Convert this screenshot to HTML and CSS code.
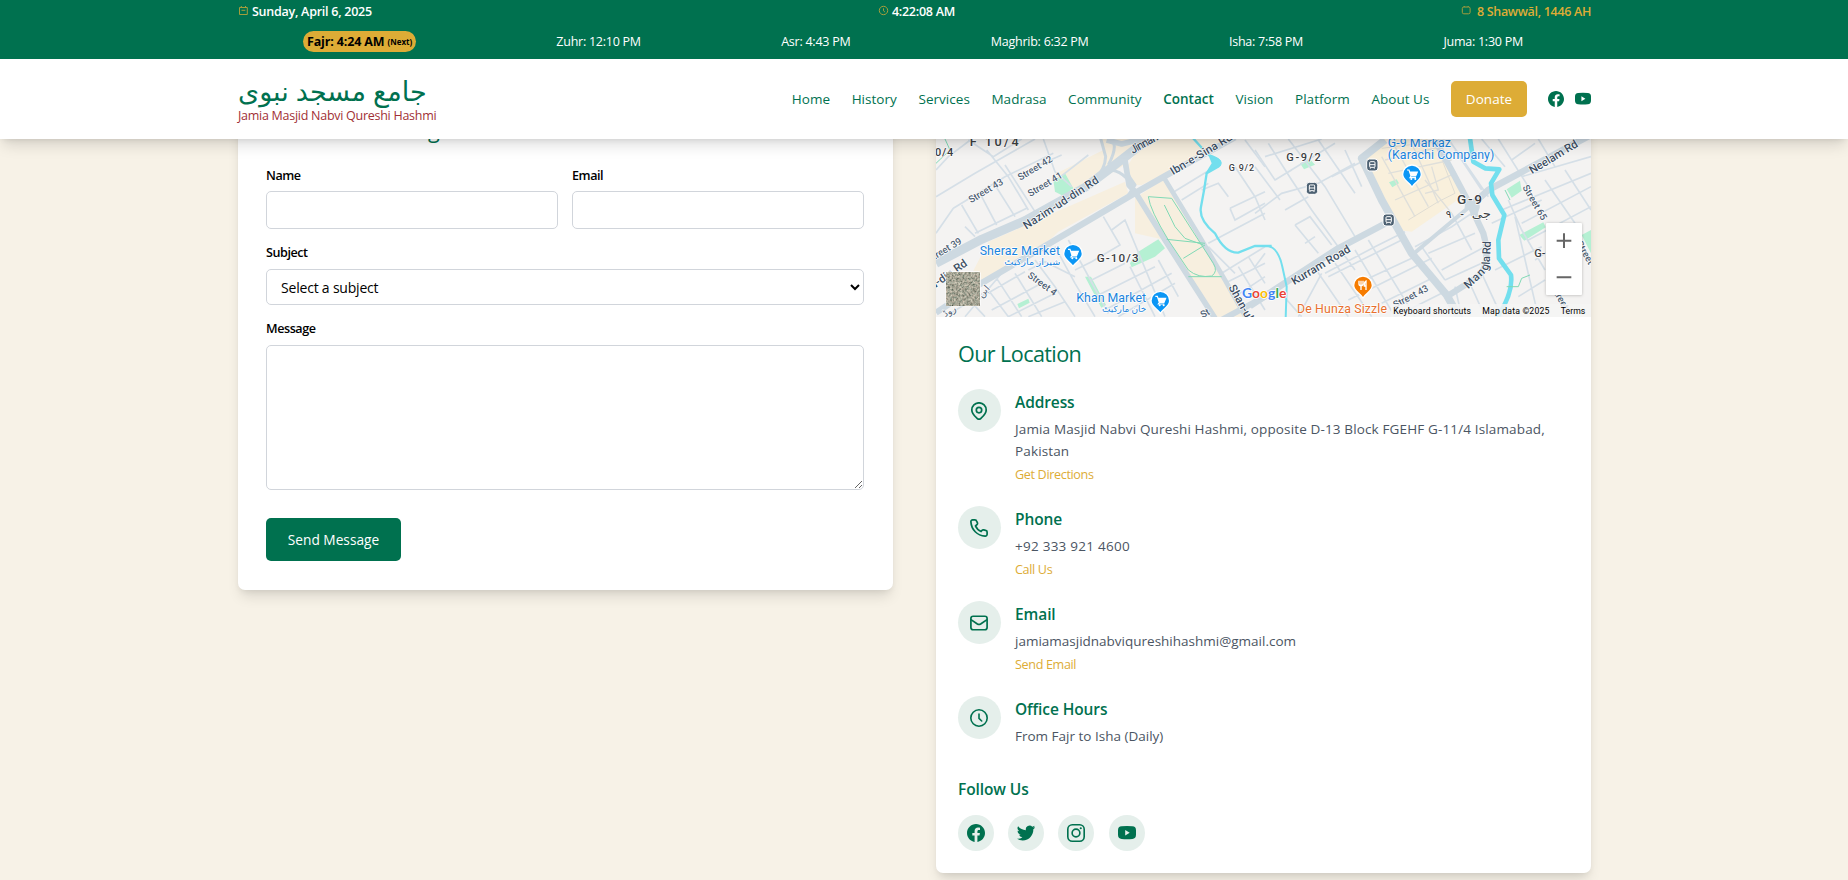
FILE: index.html
```html
<!DOCTYPE html>
<html lang="en">
<head>
<meta charset="utf-8">
<title>Contact - Jamia Masjid Nabvi Qureshi Hashmi</title>
<link rel="stylesheet" href="styles.css">
</head>
<body>
<svg class="defs" width="0" height="0">
  <symbol id="facebook" viewBox="2 2 20 20"><path fill="currentColor" d="M12 2C6.477 2 2 6.477 2 12c0 4.991 3.658 9.128 8.438 9.879V14.89H7.898V12h2.54V9.797c0-2.506 1.492-3.89 3.777-3.89 1.094 0 2.238.195 2.238.195v2.46h-1.26c-1.243 0-1.63.771-1.63 1.562V12h2.773l-.443 2.89h-2.33v6.989C18.343 21.129 22 16.99 22 12c0-5.523-4.477-10-10-10Z"/></symbol>
  <symbol id="youtube" viewBox="2 2 20 20"><path fill="currentColor" fill-rule="evenodd" d="M6 4.6Q12 4 18 4.6Q22 4.8 22 9v5q0 4.400-4 4.600Q12 19.200 6 18.600Q2 18.400 2 14V9Q2 4.800 6 4.600ZM10 8.700v6l5-3Z"/></symbol>
  <symbol id="twitter" viewBox="2 2 20 20"><path fill="currentColor" d="M22.212 5.656a8.4 8.400 0 0 1-2.402.658A4.200 4.200 0 0 0 21.650 4a8.400 8.400 0 0 1-2.656 1.015 4.182 4.182 0 0 0-7.126 3.814A11.870 11.870 0 0 1 3.247 4.460a4.180 4.180 0 0 0 1.294 5.583 4.200 4.200 0 0 1-1.894-.523v.051a4.180 4.180 0 0 0 3.355 4.102 4.200 4.200 0 0 1-1.890.072 4.190 4.190 0 0 0 3.908 2.904A8.390 8.390 0 0 1 1.828 18.380a11.830 11.830 0 0 0 6.410 1.880c7.694 0 11.900-6.373 11.900-11.899l-.012-.541a8.500 8.500 0 0 0 2.086-2.164Z"/></symbol>
  <symbol id="instagram" viewBox="2 2 20 20"><g fill="none" stroke="currentColor" stroke-width="1.800"><rect x="2.900" y="2.900" width="18.200" height="18.200" rx="5"/><circle cx="12" cy="12" r="4.300"/></g><circle cx="17.300" cy="6.700" r="1.200" fill="currentColor"/></symbol>
  <symbol id="clock" viewBox="2 2 20 20"><g fill="none" stroke="currentColor" stroke-width="1.800" stroke-linecap="round" stroke-linejoin="round"><circle cx="12" cy="12" r="9.100"/><path d="M12 7.500V12.500L15 15.300"/></g></symbol>
</svg>

<header class="header">
  <div class="topbar">
    <div class="wrap">
      <div class="today">
        <span class="stamp"><svg class="mini" viewBox="0 0 11 11"><path d="M1.500 2.500h7.800v7H1.500zM3.300 1v1.500M7.500 1v1.500M3.500 5.300h3.800"/></svg><span>Sunday, April 6, 2025</span></span>
        <span class="stamp"><svg class="mini" viewBox="0 0 11 11"><circle cx="5.500" cy="5.500" r="4.200"/><path d="M5.500 3.300v2.500l1.400 1.200"/></svg><span>4:22:08 AM</span></span>
        <span class="stamp hijri"><svg class="mini" viewBox="0 0 11 11"><rect x="1.300" y="2" width="7.800" height="6.800" rx="1.500"/><path d="M3.200 1v1M7.200 1v1"/></svg><span>8 Shawwāl, 1446 AH</span></span>
      </div>
      <div class="prayers">
        <span class="next">Fajr: 4:24 AM <small>(Next)</small></span>
        <span>Zuhr: 12:10 PM</span>
        <span>Asr: 4:43 PM</span>
        <span>Maghrib: 6:32 PM</span>
        <span>Isha: 7:58 PM</span>
        <span>Juma: 1:30 PM</span>
      </div>
    </div>
  </div>
  <div class="wrap bar">
    <a class="brand"><span class="brand-ar" dir="rtl" lang="ur">جامع مسجد نبوی</span><span class="brand-en">Jamia Masjid Nabvi Qureshi Hashmi</span></a>
    <nav class="nav">
      <a>Home</a><a>History</a><a>Services</a><a>Madrasa</a><a>Community</a><a class="active">Contact</a><a>Vision</a><a>Platform</a><a>About Us</a>
      <a class="donate">Donate</a>
      <span class="nav-social"><svg><use href="#facebook"/></svg><svg><use href="#youtube"/></svg></span>
    </nav>
  </div>
</header>

<main class="wrap content">
  <section class="card form-card">
    <h2>Send Us a Message</h2>
    <form>
      <div class="pair">
        <label>Name<input type="text"></label>
        <label>Email<input type="text"></label>
      </div>
      <label>Subject<select><option>Select a subject</option></select></label>
      <label>Message<textarea></textarea></label>
      <button type="button">Send Message</button>
    </form>
  </section>

  <section class="card info-card">
    <svg class="map" viewBox="936 139 655 178">
      <defs>
        <filter id="terrain" x="0" y="0" width="1" height="1"><feTurbulence type="fractalNoise" baseFrequency=".16" numOctaves="4" seed="8"/><feColorMatrix values=".8 .2 0 0 -.12  .65 .3 0 0 -.1  .55 .25 0 0 -.1  0 0 0 0 1"/></filter>
        <g id="cart"><path d="M-28 0a28 28 0 1 1 56 0c0 18-18 22-28 38c-10-16-28-20-28-38z" fill="#0b96f5" stroke="#fff" stroke-width="4"/><path d="M-15-13h6l6 18h14l5-12h-22M-3 5l-3 5h18" fill="none" stroke="#fff" stroke-width="3.500"/><path d="M-7-7h23l-5 12h-14z" fill="#fff"/><circle cx="-2" cy="14" r="3" fill="#fff"/><circle cx="10" cy="14" r="3" fill="#fff"/></g>
        <g id="bus"><rect x="-17" y="-17" width="34" height="36" rx="9" fill="#4d6172" stroke="#fff" stroke-width="3"/><rect x="-8" y="-9" width="16" height="17" rx="3" fill="none" stroke="#fff" stroke-width="3"/><path d="M-8 0H8M-6 8v4M6 8v4" stroke="#fff" stroke-width="3"/></g>
      </defs>
      <rect x="936" y="139" width="655" height="178" fill="#f4f3f2"/>
      <g transform="translate(925 130) scale(.33333)">
        <g fill="#f7efdf">
          <path d="M385 135L535 60L525 27H680L590 110L540 140L450 185L430 160zM190 335L600 155L610 190L400 305L380 325L230 420L110 490zM600 120L650 40L720 27H900L735 125L650 165L620 165zM630 205L720 145L860 370L960 560H870L790 430L740 340L720 330L630 310z"/>
        </g>
        <g fill="#b5f0d3"><path d="M385 150L420 130L445 175L415 198L390 185zM615 400L640 365L700 328L720 355L690 380L620 412zM480 440h18l45 85l-14 8zM277 522L310 506L314 518L282 535z"/></g>
        <g class="minor">
          <path d="M33 200L150 130L330 27M33 120L70 80L140 27M85 235L240 140L385 70M130 30L205 80L290 27M110 225L160 310M165 190L215 285M210 165L270 260M185 60L250 140L310 240M240 105L330 245M355 27L390 125L440 170M150 310L305 235M33 310L85 235M120 290L150 320M400 145L490 75M330 110L410 75"/>
          <path d="M535 260L585 345L500 395L450 420M430 330L480 420L550 550M390 350L450 460L510 560M560 300L600 270L720 560M700 390L760 500M615 410L690 560M500 450L600 400M510 500L690 410M540 540L740 430M580 560L750 460M330 390L390 470L450 560M270 430L350 560M215 445L290 560M190 480L250 560M170 500L300 425M200 540L350 460M250 560L390 490M310 560L420 515M310 420L360 395L450 440M120 560L230 430M100 475L180 560M60 560L190 480"/>
          <path d="M960 30L1020 110M930 110L990 200L1020 270M740 190L870 110M770 210L850 160M830 180L880 160L910 200M915 235L1020 185M915 235L930 270L1020 220M850 340L1020 250M850 350L930 430M890 430L1020 350M900 460L1020 400M930 500L1020 440M940 410L1020 540M970 380L1020 460"/>
        </g>
        <g class="major">
          <path d="M33 400L170 328L300 272L480 172L560 112L640 50L680 25" stroke-width="27"/>
          <path d="M33 548L160 465L400 325L620 195L720 138L930 22" stroke-width="19"/>
          <path d="M527 25L542 80Q540 120 510 145M560 27Q580 50 550 105M600 85Q590 110 630 165L610 195M560 120Q610 130 630 190" stroke-width="9"/>
          <path d="M600 90L612 165L630 185L720 330L790 440L870 565M545 30L590 42L650 27" stroke-width="17"/>
          <path d="M718 145L830 330L900 450L970 575" stroke-width="14"/>
          <path d="M880 575L1020 500" stroke-width="18"/>
        </g>
        <path d="M740 205L670 200Q675 240 730 330L790 420Q820 445 860 438Q880 425 865 400zM718 225L750 290L780 325L835 345M725 328L840 340M775 385L840 345M790 440H890" fill="none" stroke="#80d9b5" stroke-width="3"/>
        <path d="M33 100L75 60L60 27" fill="none" stroke="#80d9b5" stroke-width="3"/>
        <path d="M800 20L850 75Q900 90 880 110L845 130Q838 180 828 230Q820 270 870 310Q900 370 940 368L990 348H1040" fill="none" stroke="#73dfee" stroke-width="7"/>
        <path d="M850 75Q900 85 887 108L840 132L860 100z" fill="#73dfee"/>
      </g>
      <g transform="translate(1255 130) scale(.33333)">
        <path d="M310 95L380 27H540L630 180L600 215L470 305L430 300L370 200z" fill="#f9f0dc"/>
        <path d="M380 55L540 35L600 190L550 215L460 270" fill="none" stroke="#e0ddd3" stroke-width="3"/>
        <g fill="#b5f0d3"><path d="M135 100L165 88L180 104L147 118zM402 157L425 148L432 160L412 172zM755 178L795 152L800 182L770 203zM793 315L865 277L872 292L808 332zM980 315L1008 300V370z"/></g>
        <g class="minor">
          <path d="M0 110L75 210M0 60L60 150L110 120M40 40L110 150L170 240L300 420M100 27L210 170L300 320M190 30L300 190M0 250L80 190L190 160L300 100M60 150L240 40M90 240L160 200M120 285L190 370M120 285L165 260L230 345M150 340L180 320M30 80L200 27M230 140L320 95M320 170L270 60M0 410L30 370M130 560L200 430M60 470L140 560M170 400L280 560M210 430L360 350L450 305M340 330L480 560M300 360L420 560M240 400L350 560M220 440L440 330M330 450L480 380M280 510L530 385M380 520L540 440M420 560L560 490M480 350L590 290L650 250"/>
          <path d="M570 450L680 400M520 370L660 310M560 420L690 350M500 350L570 450M590 250L650 360M600 60L680 180M580 27L700 200M680 27L750 110M730 27L820 170M850 27L900 110M770 90L840 40M800 140L1008 80M760 210L800 300L870 420M740 240L1008 130M800 280L1008 170M820 330L1008 230M840 390L900 350M780 260L850 560M870 150L960 280M930 120L1008 240M710 280L860 210M600 470L620 560M640 450L690 560M680 430L740 560M720 420L860 350M790 500L870 450"/>
        </g>
        <path class="market" d="M390 90L560 50M400 130L590 90M420 210L600 130M380 80L480 260M420 50L520 230M470 40L550 220M510 150L590 250M510 190L550 180L530 110"/>
        <g class="major">
          <path d="M-15 528L100 452L250 355L420 265" stroke-width="20"/>
          <path d="M475 372L560 300L650 225" stroke-width="12"/>
          <path d="M650 225L700 180L830 110L1020 8" stroke-width="20"/>
          <path d="M390 30L320 85L380 210L470 370L575 495L620 575" stroke-width="23"/>
          <path d="M535 20L600 140L645 225L685 310Q710 400 670 440L575 500" stroke-width="19"/>
          <path d="M630 225L665 230L655 260" stroke-width="19"/>
        </g>
        <path d="M645 25L655 95L690 115L733 118L708 160L712 195L748 255L730 330L732 385L768 435Q775 490 725 565" fill="none" stroke="#73dfee" stroke-width="14" stroke-linejoin="round"/>
        <path d="M0 348L40 348Q70 355 82 410L95 470L92 565" fill="none" stroke="#73dfee" stroke-width="6"/>
        <path d="M755 470H790L800 445L825 435M750 180L765 210" fill="none" stroke="#80d9b5" stroke-width="3"/>
      </g>
      <g class="places" transform="translate(925 130) scale(.33333)">
        <text class="area" x="134" y="49" font-size="38" textLength="147">F 10/4</text>
        <text class="area" x="30" y="79" font-size="33" textLength="55">0/4</text>
        <text class="street" transform="translate(286 152) rotate(-31)" textLength="115">Street 42</text>
        <text class="street" transform="translate(316 201) rotate(-31)" textLength="115">Street 41</text>
        <text class="street" transform="translate(138 220) rotate(-31)" textLength="115">Street 43</text>
        <text class="street" transform="translate(14 398) rotate(-31)" textLength="115">Street 39</text>
        <text class="street" transform="translate(306 440) rotate(36)" textLength="100">Street 4</text>
        <text class="road" transform="translate(304 299) rotate(-33)" textLength="262">Nazim-ud-din Rd</text>
        <text class="road" transform="translate(8 490) rotate(-35)" textLength="148">ud-din Rd</text>
        <text class="road" transform="translate(623 72) rotate(-29)" textLength="90">Jinnah</text>
        <text class="road" transform="translate(744 136) rotate(-31)" textLength="211">Ibn-e-Sina Rd</text>
        <text class="area" x="911" y="124" font-size="27" textLength="76">G 9/2</text>
        <text class="area" x="515" y="395" font-size="35" textLength="126">G-10/3</text>
        <text class="road" transform="translate(910 472) rotate(61)">Shan-ul-Haq</text>
        <text class="street" transform="translate(170 505) rotate(-48)">ابن</text>
        <text class="street" transform="translate(60 562) rotate(-30)">روڈ</text>
        <text class="street" transform="translate(833 565) rotate(-30)">St</text>
        <g class="shop"><text x="164" y="374" textLength="241">Sheraz Market</text><text class="ur" x="406" y="405" direction="rtl" textLength="168" lengthAdjust="spacingAndGlyphs">شیراز مارکیٹ</text><text x="454" y="517" textLength="209">Khan Market</text><text class="ur" x="664" y="545" direction="rtl" textLength="133" lengthAdjust="spacingAndGlyphs">خان مارکیٹ</text></g>
        <use href="#cart" x="444" y="371"/><use href="#cart" x="706" y="512"/>
        <g class="google"><text x="951" y="503" textLength="133" lengthAdjust="spacingAndGlyphs"><tspan fill="#4285f4">G</tspan><tspan fill="#ea4335">o</tspan><tspan fill="#fbbc05">o</tspan><tspan fill="#4285f4">g</tspan><tspan fill="#34a853">l</tspan><tspan fill="#ea4335">e</tspan></text></g>
        <rect x="62" y="424" width="105" height="105" rx="6" fill="#fff"/><rect x="65" y="427" width="99" height="99" rx="3" filter="url(#terrain)"/>
      </g>
      <g class="places" transform="translate(1255 130) scale(.33333)">
        <text class="area" x="94" y="94" font-size="33" textLength="103">G-9/2</text>
        <g class="shop"><text x="398" y="52" textLength="190">G-9 Markaz</text><text x="398" y="88" textLength="320">(Karachi Company)</text></g>
        <text class="area" x="606" y="221" font-size="41" textLength="75">G-9</text>
        <text class="area" x="572" y="263" font-size="32">۹</text><text class="area" x="616" y="263" font-size="32">-</text><text class="area" x="650" y="263" font-size="34" textLength="58" lengthAdjust="spacingAndGlyphs">جی</text>
        <text class="area" x="838" y="381" font-size="33">G-</text>
        <text class="road" transform="translate(831 133) rotate(-31)" textLength="164">Neelam Rd</text>
        <text class="street" transform="translate(802 172) rotate(60)" textLength="117">Street 65</text>
        <text class="street" transform="translate(963 340) rotate(60)" textLength="76">Street</text>
        <text class="street" transform="translate(888 475) rotate(60)" textLength="76">Street</text>
        <text class="road" transform="translate(118 466) rotate(-31)" textLength="199">Kurram Road</text>
        <text class="street" transform="translate(421 535) rotate(-28)" textLength="115">Street 43</text>
        <text class="road" transform="translate(640 478) rotate(-44)" textLength="72">Man</text>
        <text class="road" transform="translate(697 424) rotate(-70)">g</text>
        <text class="road" transform="translate(704 404) rotate(-87)" textLength="70">la Rd</text>
        <use href="#bus" x="352" y="104"/><use href="#bus" x="171" y="174"/><use href="#bus" x="401" y="269"/>
        <use href="#cart" x="471" y="133"/>
        <path d="M296 466a28 28 0 1 1 56 0c0 18-18 22-28 38c-10-16-28-20-28-38z" fill="#f67c01" stroke="#fff" stroke-width="4"/><path d="M312 452v9q0 6 6 6t6-6v-9M318 452v28M333 480v-27q-6 3-5 15h5" fill="none" stroke="#fff" stroke-width="4"/>
        <text x="126" y="549" class="food" textLength="270">De Hunza Sizzle</text>
        <rect x="408" y="522" width="600" height="40" fill="#f5f5f5" fill-opacity=".85"/>
        <g class="legal"><text x="415" y="551" textLength="233">Keyboard shortcuts</text><text x="682" y="551" textLength="201">Map data ©2025</text><text x="917" y="551" textLength="74">Terms</text></g>
        <rect x="873" y="279" width="108" height="216" rx="3" fill="#fff" class="zoom"/><path d="M905 332h44M927 310v44M905 442h44" stroke="#666" stroke-width="6"/>
      </g>
    </svg>
    <div class="info">
      <h2>Our Location</h2>
      <div class="rows">
        <div class="row"><span class="disc"><svg viewBox="2 2 20 20"><g fill="none" stroke="currentColor" stroke-width="1.900" stroke-linejoin="round"><path d="M12 2.900a8 8 0 0 0-8 8c0 4 2.600 6.300 5.800 9.200q2.200 2 4.400 0C17.400 17.200 20 14.900 20 10.900a8 8 0 0 0-8-8z"/><circle cx="12" cy="11" r="3"/></g></svg></span>
          <div><h3>Address</h3><p class="address">Jamia Masjid Nabvi Qureshi Hashmi, opposite D-13 Block FGEHF G-11/4 Islamabad, Pakistan</p><a>Get Directions</a></div></div>
        <div class="row"><span class="disc"><svg viewBox="2 2 20 20"><path fill="none" stroke="currentColor" stroke-width="1.900" stroke-linejoin="round" d="M6.500 3H4.900A2 2 0 0 0 3 5.200C3.600 14 10 20.400 18.800 21A2 2 0 0 0 21 19v-2.400a2 2 0 0 0-1.600-2l-2.200-.5a2 2 0 0 0-2 .7l-.9 1.100c-2.600-1-5-3.400-6.200-6.200l1.500-1.300a2 2 0 0 0 .7-2L9.400 4.600A2 2 0 0 0 7.400 3z"/></svg></span>
          <div><h3>Phone</h3><p class="phone">+92 333 921 4600</p><a>Call Us</a></div></div>
        <div class="row"><span class="disc"><svg viewBox="2 2 20 20"><g fill="none" stroke="currentColor" stroke-width="1.900" stroke-linecap="round" stroke-linejoin="round"><rect x="3" y="4.500" width="18" height="15" rx="2.500"/><path d="M3.500 8.500l6.700 4.600q1.800 1.100 3.600 0l6.700-4.600"/></g></svg></span>
          <div><h3>Email</h3><p>jamiamasjidnabviqureshihashmi@gmail.com</p><a>Send Email</a></div></div>
        <div class="row"><span class="disc"><svg><use href="#clock"/></svg></span>
          <div><h3>Office Hours</h3><p>From Fajr to Isha (Daily)</p></div></div>
      </div>
      <h3 class="follow">Follow Us</h3>
      <div class="social"><span><svg><use href="#facebook"/></svg></span><span><svg><use href="#twitter"/></svg></span><span><svg><use href="#instagram"/></svg></span><span><svg><use href="#youtube"/></svg></span></div>
    </div>
  </section>
</main>
</body>
</html>
```
FILE: styles.css
```css
* { box-sizing: border-box; }
body { margin: 0; height: 880px; overflow: hidden; background: #f7f2e7; font-family: "Open Sans", "Noto Sans", "DejaVu Sans", sans-serif; color: #000; }
h2, h3, p { margin: 0; font-weight: 400; }
.defs { display: block; }
.wrap { width: 1353px; margin: 0 auto 0 238px; }

.header { position: relative; z-index: 2; height: 139px; background: #fff; box-shadow: 0 9px 14px -3px rgba(0,0,0,.13), 0 3px 6px -3px rgba(0,0,0,.12); }
.topbar { height: 59px; background: #00714f; color: #fff; }
.today { height: 24px; display: flex; justify-content: space-between; }
.stamp { display: flex; gap: 3px; font-size: 12.5px; font-weight: 600; line-height: 23px; letter-spacing: -.25px; }
.mini { width: 11px; height: 11px; margin-top: 5px; fill: none; stroke: #ddac36; stroke-width: 1; opacity: .75; }
.hijri { color: #ddac36; letter-spacing: -.32px; }
.hijri .mini { margin-right: 2px; }
.prayers { display: flex; justify-content: space-between; align-items: center; height: 35px; padding: 0 68px 1px 65px; font-size: 12.5px; font-weight: 500; letter-spacing: -.25px; line-height: 21px; }
.next { width: 113px; background: #ddac36; color: #000; font-weight: 700; border-radius: 11px; padding: 0 4px; height: 21px; letter-spacing: -.15px; white-space: nowrap; }
.next small { font-size: 8px; letter-spacing: 0; vertical-align: 1px; }

.bar { display: flex; justify-content: space-between; align-items: center; height: 80px; }
.brand { display: flex; flex-direction: column; align-items: flex-start; padding-bottom: 1px; }
.brand-ar { font-size: 27px; line-height: 34px; color: #00714f; }
.brand-en { font-size: 12.5px; line-height: 16px; color: #9f3035; letter-spacing: -.27px; }
.nav { display: flex; align-items: center; gap: 21.6px; font-size: 13.5px; letter-spacing: .03px; color: #00714f; }
.active { font-weight: 600; }
.donate { width: 76px; height: 36px; margin-right: -.6px; border-radius: 5px; background: #ddac36; color: #fff; font-weight: 500; text-align: center; line-height: 36px; }
.nav-social { display: flex; gap: 11px; }
.nav-social svg { width: 16px; height: 16px; }

.content { display: flex; align-items: flex-start; gap: 43px; margin-top: -30px; }
.card { width: 655px; background: #fff; border-radius: 7px; box-shadow: 0 9px 14px -3px rgba(0,0,0,.12), 0 3px 6px -2px rgba(0,0,0,.08); }
.form-card { height: 481px; padding: 7px 29px 0 28px; }
.form-card h2 { font-size: 21.6px; line-height: 28px; letter-spacing: -.5px; color: #00714f; }
.form-card form { padding-top: 19px; }
.form-card label { display: block; font-size: 12.6px; font-weight: 600; letter-spacing: -.45px; line-height: 18px; padding-top: 4px; }
.pair { display: grid; grid-template-columns: 292px 292px; gap: 14px; margin-bottom: 11px; }
input, select, textarea { display: block; width: 598px; border: 1px solid #d1d5db; border-radius: 5px; background: #fff; outline: 0; color: #000; font: 14px "Open Sans", "Noto Sans", sans-serif; }
.pair input { width: 292px; height: 38px; margin-top: 6px; }
select { height: 36px; margin: 7px 0 11px; padding: 0 10px; letter-spacing: -.2px; }
textarea { height: 145px; margin-top: 7px; }
button { display: block; width: 135px; height: 43px; margin-top: 28px; padding: 0 0 1px; border: 0; border-radius: 5px; background: #00714f; color: #fff; font: 13.7px "Open Sans", "Noto Sans", sans-serif; }

.info-card { height: 764px; padding-top: 30px; }
.map { display: block; width: 655px; height: 178px; }
.minor { fill: none; stroke: #d5dfe7; stroke-width: 5; }
.market { fill: none; stroke: #dfdfda; stroke-width: 4; }
.major { fill: none; stroke: #cdd9e1; stroke-linejoin: round; }
.places { font-family: Roboto, "DejaVu Sans", sans-serif; }
.places text { paint-order: stroke; stroke: #fff; stroke-width: 4px; stroke-linejoin: round; }
.area { fill: #3c4043; font-weight: 500; }
.street { fill: #4f6174; font-size: 29px; font-weight: 500; }
.road { fill: #3d4f63; font-size: 34px; font-weight: 500; }
.shop { fill: #1a84dd; font-size: 37px; }
.shop .ur { font-size: 26px; }
.food { fill: #e8702e; font-size: 37px; }
.google { font-family: Lato, sans-serif; font-size: 38px; font-weight: 700; }
.legal { fill: #000; font-size: 26px; }
.places .legal text { stroke: none; }
.zoom { filter: drop-shadow(0 1px 4px rgba(0,0,0,.25)); }

.info { padding: 22px 22px 0; }
.info h2 { font-size: 21.6px; line-height: 30px; letter-spacing: -.6px; color: #00714f; }
.rows { display: flex; flex-direction: column; gap: 21px; padding-top: 20px; }
.row { display: grid; grid-template-columns: 43px 1fr; gap: 14px; }
.disc { display: flex; align-items: center; justify-content: center; width: 43px; height: 43px; padding-right: 2px; border-radius: 50%; background: #e5efeb; color: #00714f; }
.disc svg, .social svg { width: 18px; height: 18px; }
.row h3, .follow { font-size: 15.5px; font-weight: 600; letter-spacing: -.1px; line-height: 27px; color: #00714f; }
.row p { line-height: 22px; padding-top: 2px; color: #4b5563; font-size: 13.5px; }
.row .address { letter-spacing: .14px; }
.row .phone { letter-spacing: .25px; }
.row a { display: block; line-height: 21px; padding-top: 2px; color: #ddac36; font-size: 12.6px; letter-spacing: -.35px; }
.follow { margin-top: 29px; }
.social { display: flex; gap: 14.2px; padding-top: 11.8px; color: #00714f; }
.social span { display: flex; width: 36px; height: 36px; align-items: center; justify-content: center; border-radius: 50%; background: #e5efeb; }
```
